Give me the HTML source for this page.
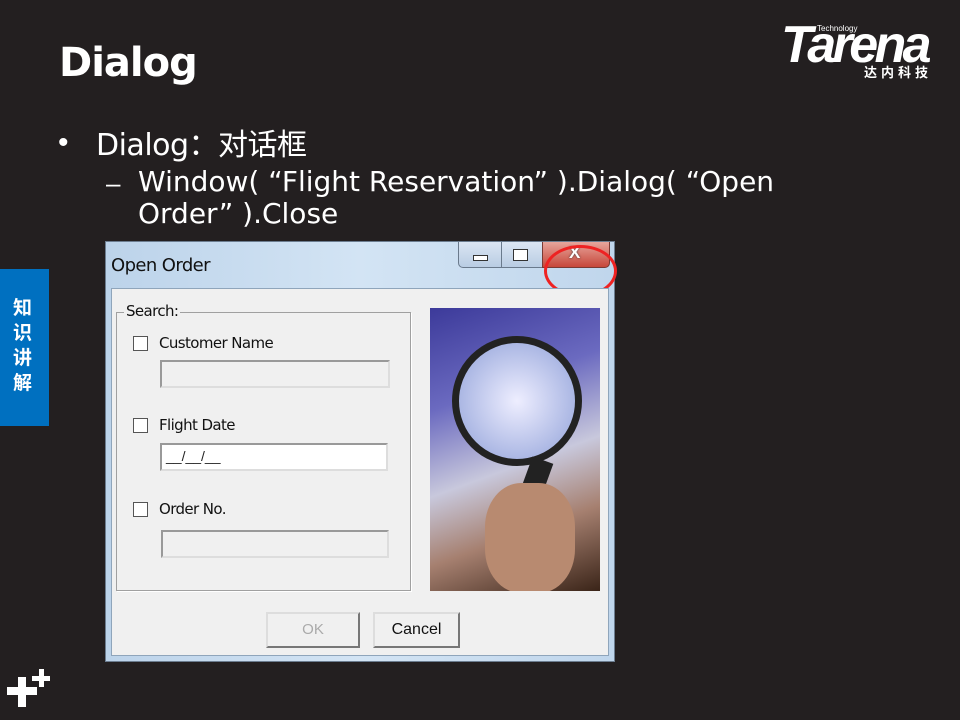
<!DOCTYPE html>
<html><head><meta charset="utf-8"><style>
*{margin:0;padding:0;box-sizing:border-box}
body{width:960px;height:720px;background:#231f20;position:relative;overflow:hidden;font-family:"Liberation Sans","Noto Sans CJK SC",sans-serif;color:#fff}
.a{position:absolute}
.t{font-family:"DejaVu Sans","Liberation Sans",sans-serif}
.dlg{left:105px;top:241px;width:510px;height:421px;background:linear-gradient(90deg,#bcd3ea,#d3e4f4 50%,#c0d6ec);border:1px solid #6c7d90}
.client{left:5px;top:46px;width:498px;height:368px;background:#f0f0f0;border:1px solid #8fa5bb}
.w{color:#111;font-family:"DejaVu Sans","Liberation Sans",sans-serif;font-size:15px;letter-spacing:-0.6px}
.cb{width:15px;height:15px;border:1px solid #555;background:#fff}
.ed{height:28px;border:2px solid #999;border-right-color:#ddd;border-bottom-color:#ddd;background:#f0f0f0}
.btn{height:36px;border:2px solid #777;border-top-color:#ddd;border-left-color:#ddd;background:#f0f0f0;text-align:center;line-height:32px}
</style></head><body>
<div class="a t" style="left:59px;top:40px;font-size:40px;font-weight:bold;letter-spacing:-1px">Dialog</div>
<div class="a" style="left:781px;top:17px;font-size:52px;font-weight:900;font-style:italic;letter-spacing:-3.6px;line-height:56px">Tarena</div>
<div class="a" style="left:817px;top:24px;font-size:8px">Technology</div>
<div class="a" style="left:864px;top:62px;font-size:13px;font-weight:bold;letter-spacing:4px">达内科技</div>
<div class="a" style="left:58px;top:126px;font-size:30px">•</div>
<div class="a" style="left:96px;top:120px;font-size:30px;font-family:'DejaVu Sans','Noto Sans CJK SC',sans-serif;letter-spacing:-0.5px">Dialog：对话框</div>
<div class="a" style="left:106px;top:168px;font-size:26px">–</div>
<div class="a" style="left:138px;top:166px;font-size:28px;line-height:32px;font-family:'DejaVu Sans','Noto Sans CJK SC',sans-serif;letter-spacing:0px;width:700px">Window( “Flight Reservation” ).Dialog( “Open Order” ).Close</div>
<div class="a" style="left:0;top:269px;width:49px;height:157px;background:#0070c0"></div>
<div class="a" style="left:13px;top:294px;width:24px;font-size:19px;font-weight:bold;line-height:25px;font-family:'Noto Sans CJK SC',sans-serif">知识讲解</div>
<div class="a" style="left:7px;top:687px;width:30px;height:8px;background:#fff"></div>
<div class="a" style="left:18px;top:677px;width:8px;height:30px;background:#fff"></div>
<div class="a" style="left:32px;top:676px;width:18px;height:5px;background:#fff"></div>
<div class="a" style="left:39px;top:669px;width:5px;height:18px;background:#fff"></div>

<div class="a dlg">
<div class="a w" style="left:5px;top:13px;font-size:18px">Open Order</div>
<div class="a" style="left:352px;top:0;width:120px;height:26px;border:1px solid #6a7a8c;border-top:none;border-radius:0 0 5px 5px;background:linear-gradient(#dbe6f3,#b9cde3)"></div>
<div class="a" style="left:395px;top:0;width:1px;height:26px;background:#6a7a8c"></div>
<div class="a" style="left:436px;top:0;width:68px;height:26px;background:linear-gradient(#e7a59c,#c7473a);border:1px solid #7a3a34;border-top:none;border-radius:0 0 5px 0"></div>
<div class="a" style="left:367px;top:13px;width:15px;height:6px;border:1px solid #333;background:#fff"></div>
<div class="a" style="left:407px;top:7px;width:15px;height:12px;border:1px solid #333;background:#fff"></div>
<div class="a" style="left:463px;top:1px;font-size:17px;font-weight:bold;color:#fff;text-shadow:0 0 2px #333">X</div>
<div class="a" style="left:438px;top:3px;width:73px;height:52px;border:3px solid #e22;border-radius:50%"></div>
<div class="a client">
 <div class="a" style="left:4px;top:23px;width:295px;height:279px;border:1px solid #a0a0a0;box-shadow:1px 1px 0 #fff"></div>
 <div class="a w" style="left:12px;top:13px;background:#f0f0f0;padding:0 2px">Search:</div>
 <div class="a cb" style="left:21px;top:47px"></div><div class="a w" style="left:47px;top:45px">Customer Name</div>
 <div class="a ed" style="left:48px;top:71px;width:230px"></div>
 <div class="a cb" style="left:21px;top:129px"></div><div class="a w" style="left:47px;top:127px">Flight Date</div>
 <div class="a ed" style="left:48px;top:154px;width:228px;background:#fff;color:#222;font-size:14px;padding-left:4px;line-height:22px">__/__/__</div>
 <div class="a cb" style="left:21px;top:213px"></div><div class="a w" style="left:47px;top:211px">Order No.</div>
 <div class="a ed" style="left:49px;top:241px;width:228px"></div>
 <div class="a" style="left:318px;top:19px;width:170px;height:283px;background:linear-gradient(160deg,#3c3a9a,#6b6ac0 30%,#c8c8dc 55%,#a68070 75%,#3a2418);overflow:hidden">
  <div class="a" style="left:22px;top:28px;width:130px;height:130px;border-radius:50%;border:7px solid #222;background:radial-gradient(#eef,#8fa0d8)"></div>
  <div class="a" style="left:90px;top:150px;width:22px;height:70px;background:#222;transform:rotate(20deg)"></div>
  <div class="a" style="left:55px;top:175px;width:90px;height:110px;border-radius:40%;background:#b88a70"></div>
 </div>
 <div class="a btn" style="left:154px;top:323px;width:94px;color:#aaa;font-size:15px">OK</div>
 <div class="a btn" style="left:261px;top:323px;width:87px;font-size:16px;color:#111;border-color:#ddd #777 #777 #ddd">Cancel</div>
</div>
</div>
</body></html>
